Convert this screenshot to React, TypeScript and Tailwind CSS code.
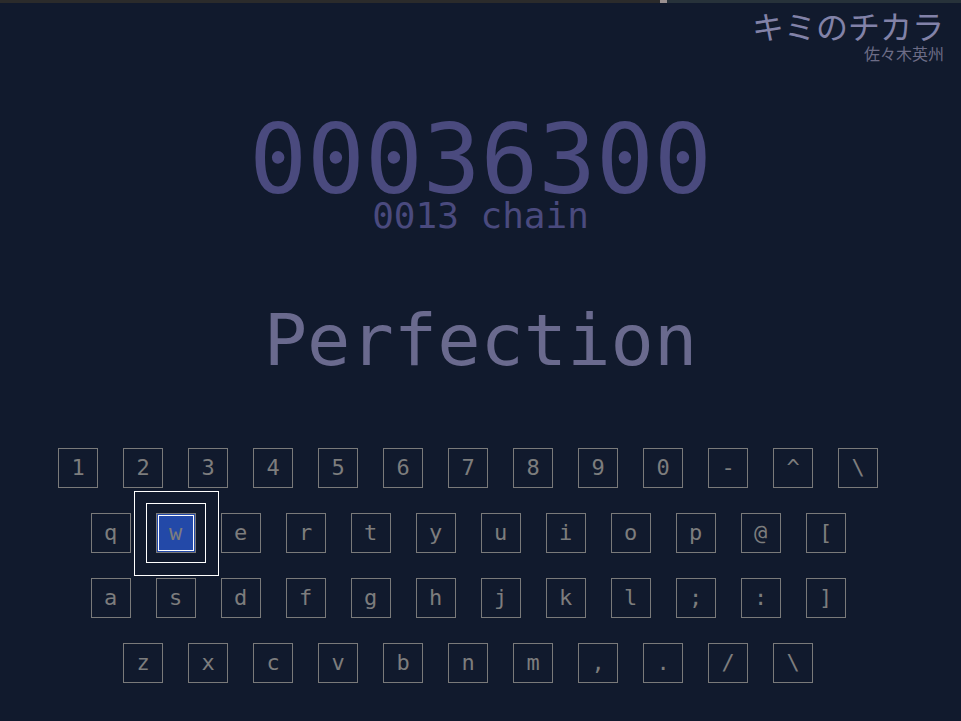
const rows: string[][] = [
  ["1", "2", "3", "4", "5", "6", "7", "8", "9", "0", "-", "^", "\\"],
  ["q", "w", "e", "r", "t", "y", "u", "i", "o", "p", "@", "["],
  ["a", "s", "d", "f", "g", "h", "j", "k", "l", ";", ":", "]"],
  ["z", "x", "c", "v", "b", "n", "m", ",", ".", "/", "\\"],
];

const activeKey = "w";

function Key({ label }: { label: string }) {
  const active = label === activeKey;
  return (
    <div
      className={
        active
          ? "relative mr-[25px] flex h-[40px] w-[40px] items-center justify-center border border-[#7a7a7a] bg-[#2349a8] text-[22px] text-[#7d7d7d]"
          : "relative mr-[25px] flex h-[40px] w-[40px] items-center justify-center border border-[#7a7a7a] text-[22px] text-[#7d7d7d]"
      }
    >
      {active && (
        <>
          <div className="absolute inset-[1px] border border-white" />
          <div className="absolute left-[-11px] top-[-11px] h-[60px] w-[60px] border border-white" />
          <div className="absolute left-[-23px] top-[-23px] h-[85px] w-[85px] border border-white" />
        </>
      )}
      <span className="relative leading-none">{label}</span>
    </div>
  );
}

export default function App() {
  return (
    <div className="min-h-screen w-full overflow-hidden bg-[#111a2d] font-['DejaVu_Sans_Mono',monospace]">
      {/* progress bar */}
      <div className="flex h-[3px]">
        <div className="w-[660px] bg-[#2b2b2b]" />
        <div className="w-[7px] bg-[#9a9090]" />
        <div className="flex-1 bg-[#27323a]" />
      </div>

      <div className="flex flex-col items-end pr-[17px] pt-[3px] font-['Noto_Sans_CJK_JP',sans-serif]">
        <div className="text-[32px] leading-[38px] text-[#8282a8]">キミのチカラ</div>
        <div className="text-[16px] leading-[18px] text-[#6c6c86]">佐々木英州</div>
      </div>

      <div className="mt-[60px] flex flex-col items-center">
        <div className="text-[96px] leading-[76px] text-[#4a4a7e]">00036300</div>
        <div className="mt-[3px] text-[36px] leading-[30px] text-[#4a4a7e]">0013 chain</div>
        <div className="mt-[73px] text-[72px] leading-[72px] text-[#6a6a8e]">Perfection</div>
      </div>

      <div className="mt-[72px] flex flex-col gap-[25px]">
        {rows.map((row, i) => (
          <div key={i} className="flex justify-center">
            {row.map((k, j) => (
              <Key key={j} label={k} />
            ))}
          </div>
        ))}
      </div>
    </div>
  );
}
